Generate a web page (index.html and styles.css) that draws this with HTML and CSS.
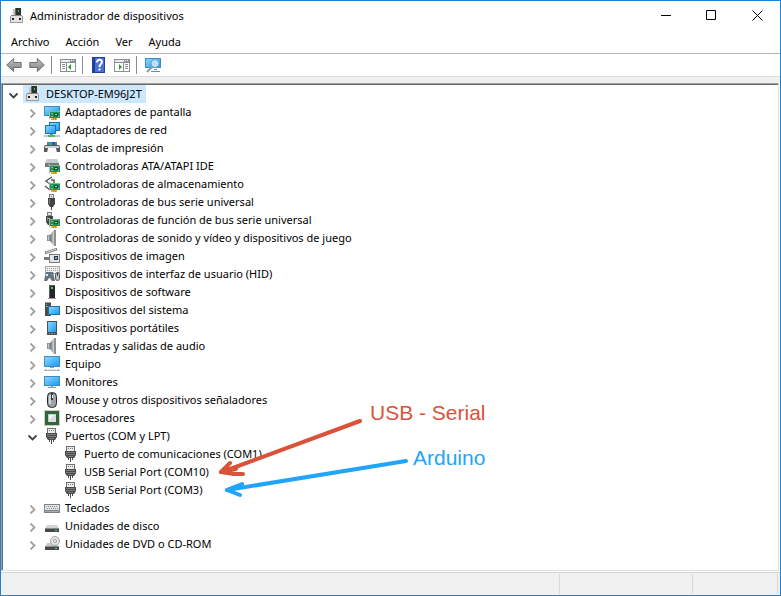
FILE: index.html
```html
<!DOCTYPE html>
<html lang="es">
<head>
    <meta charset="UTF-8">
    <meta name="viewport" content="width=device-width, initial-scale=1.0">
    <title>Administrador de dispositivos</title>
    <link rel="stylesheet" href="styles.css">
</head>
<body>
    <svg class="sprite" aria-hidden="true">
        <defs>
            <linearGradient id="screen" x1="0" y1="0" x2="1" y2="1">
                <stop offset="0" stop-color="#8ad6ff"/>
                <stop offset="1" stop-color="#1b9bf5"/>
            </linearGradient>
            <linearGradient id="metal" x1="0" y1="0" x2="1" y2="0">
                <stop offset="0" stop-color="#6d7276"/>
                <stop offset="1" stop-color="#d5d8da"/>
            </linearGradient>
            <linearGradient id="arrow" x1="0" y1="0" x2="0" y2="1">
                <stop offset="0" stop-color="#c4c4c4"/>
                <stop offset="1" stop-color="#7d7d7d"/>
            </linearGradient>
        </defs>

        <!-- shared parts -->
        <symbol id="card" viewBox="0 0 16 16">
            <path fill="#f2b01e" d="M7 13h6v3H7z"/>
            <path fill="#c98f10" d="M9 14h1v2H9zM11 14h1v2h-1z"/>
            <path fill="#a9b0b4" d="M4 6h2v9H5V7H4z"/>
            <path fill="#2c8a55" d="M6 7h10v7H6z"/>
            <path fill="#6cc28b" d="M6 7h10v1H6zM7 9h2v1H7zM14 12h1v1h-1zM7 12h2v1H7z"/>
            <path fill="#14532f" d="M10 9h4v3h-4z"/>
            <path fill="#9adfb0" d="M11 10h2v1h-2z"/>
        </symbol>
        <symbol id="plug" viewBox="0 0 16 16">
            <path fill="#6f6f6f" d="M3 0h9v5H3z"/>
            <path fill="#ececec" d="M4 1h7v4H4z"/>
            <path fill="#777" d="M5 2h1v1H5zM7 2h1v1H7zM9 2h1v1H9z"/>
            <path fill="#4a4a4a" d="M2 5h11v4l-2 3H4L2 9z"/>
            <path fill="#7d7d7d" d="M3 6h9v1H3zM3 8h9v1H3zM5 10h5v1H5z"/>
            <path fill="#4a4a4a" d="M5 12h1v2H5zM9 12h1v2H9zM7 12h1v4H7z"/>
        </symbol>

        <!-- window and toolbar -->
        <symbol id="pc" viewBox="0 0 16 16">
            <path fill="#c4c4c4" d="M4 1h3v6H4z"/>
            <path fill="#303030" d="M7 0h5v7H7z"/>
            <path fill="#666" d="M6 0h1v7H6z"/>
            <path fill="#29d64b" d="M9 2h1v2H9z"/>
            <path fill="#9b9b9b" d="M1 8h13v7H1z"/>
            <path fill="#e4e4e4" d="M2 8h11v6H2z"/>
            <path fill="#888" d="M2 7h11v1H2z"/>
            <path fill="#222" d="M3 10h2v2H3zM10 10h2v2h-2z"/>
        </symbol>
        <symbol id="back" viewBox="0 0 16 16">
            <path fill="url(#arrow)" stroke="#707070" d="M.7 8l7-6.500v4h7.500v5H7.700v4z"/>
        </symbol>
        <symbol id="forward" viewBox="0 0 16 16">
            <path fill="url(#arrow)" stroke="#707070" d="M15.300 8l-7-6.500v4H.8v5h7.500v4z"/>
        </symbol>
        <symbol id="tree-pane" viewBox="0 0 16 16">
            <path fill="#8b9097" d="M0 2h16v13H0z"/>
            <path fill="#fff" d="M1 6h5v8H1zM7 6h8v8H7z"/>
            <path fill="#e8ecf0" d="M1 3h9v2H1z"/>
            <path fill="#fff" d="M11 3h1v1h-1zM13 3h1v1h-1z"/>
            <path fill="#8b9097" d="M2 7h3v1H2zM2 9h3v1H2zM2 11h3v1H2z"/>
            <path fill="#2c9a2c" d="M11 7v6l-3-3z"/>
        </symbol>
        <symbol id="help" viewBox="0 0 16 16">
            <path fill="#223f9c" d="M1 0h13v16H1z"/>
            <path fill="#4a6fd0" d="M4 1h9v14H4z"/>
            <path fill="none" stroke="#fff" stroke-width="2" d="M6 5.500c0-4 5-3.500 5-.5 0 2-2.500 2-2.500 5"/>
            <path fill="#fff" d="M7.500 11.500h2v2h-2z"/>
        </symbol>
        <symbol id="action-pane" viewBox="0 0 16 16">
            <path fill="#8b9097" d="M0 2h16v13H0z"/>
            <path fill="#fff" d="M1 6h8v8H1zM10 6h5v8h-5z"/>
            <path fill="#e8ecf0" d="M1 3h9v2H1z"/>
            <path fill="#fff" d="M11 3h1v1h-1zM13 3h1v1h-1z"/>
            <path fill="#8b9097" d="M11 7h3v1h-3zM11 9h3v1h-3zM11 11h3v1h-3z"/>
            <path fill="#2c9a2c" d="M5 7v6l3-3z"/>
        </symbol>
        <symbol id="scan" viewBox="0 0 16 16">
            <path fill="#3f8cc0" d="M0 1h16v10H0z"/>
            <path fill="url(#screen)" d="M1 2h14v8H1z"/>
            <path fill="#5b8fb0" d="M9 12h3v1H9zM6 14h9v1H6z"/>
            <path stroke="#8b9aa6" stroke-width="2" d="M7 10l-5 5"/>
            <circle cx="10" cy="6.500" r="4" fill="#b8e4ff" stroke="#7f9bb0"/>
        </symbol>

        <!-- device categories -->
        <symbol id="display-adapter" viewBox="0 0 16 16">
            <path fill="#3f8cc0" d="M0 2h16v10H0z"/>
            <path fill="url(#screen)" d="M1 3h14v8H1z"/>
            <use href="#card"/>
        </symbol>
        <symbol id="network" viewBox="0 0 16 16">
            <path fill="#246fa8" d="M5 0h11v9H5z"/>
            <path fill="url(#screen)" d="M6 1h9v7H6z"/>
            <path fill="#246fa8" d="M1 3h11v9H1z"/>
            <path fill="url(#screen)" d="M2 4h9v7H2z"/>
            <path fill="#c3c7c9" d="M0 13h16v2H0z"/>
            <path fill="#4fb56a" d="M6 12h3v1h2v2H4v-2h2z"/>
        </symbol>
        <symbol id="printer" viewBox="0 0 16 16">
            <path fill="#777" d="M3 2h10v4H3z"/>
            <path fill="#18a5df" d="M5 2h3v3H5z"/>
            <path fill="#2456c8" d="M8 2h3v3H8z"/>
            <path fill="#34b74e" d="M6 4h2v1H6z"/>
            <path fill="#55595d" d="M1 5h14l1 2v5H0V7z"/>
            <path fill="#cfd2d4" d="M1 6h14v2H1z"/>
            <path fill="#fafafa" d="M4 8h8l1 5H3z"/>
        </symbol>
        <symbol id="ata" viewBox="0 0 16 16">
            <path fill="#c8cbcd" d="M3 1h10l2 4H1z"/>
            <path fill="#75797c" d="M1 5h14v4H1z"/>
            <use href="#card"/>
        </symbol>
        <symbol id="storage" viewBox="0 0 16 16">
            <path fill="none" stroke="#5a5a5a" stroke-width="1.500" d="M8 1L2 5l4 3M7 4h3v4H7M1 10l5 4"/>
            <use href="#card"/>
        </symbol>
        <symbol id="usb" viewBox="0 0 16 16">
            <path fill="#808080" d="M5 0h5v5H5z"/>
            <path fill="#e6e6e6" d="M6 1h3v3H6z"/>
            <path fill="#777" d="M7 2h1v1H7z"/>
            <path fill="#444" d="M4 4h7v6l-2 3H6l-2-3z"/>
            <path fill="#808080" d="M5 5h1v5H5z"/>
            <path fill="#444" d="M7 13h1v3H7z"/>
        </symbol>
        <symbol id="usb-function" viewBox="0 0 16 16">
            <path fill="#808080" d="M3 0h5v4H3z"/>
            <path fill="#e6e6e6" d="M4 1h3v2H4z"/>
            <path fill="#444" d="M2 4h7v6l-2 3H4l-2-3z"/>
            <path fill="#808080" d="M3 5h1v4H3z"/>
            <path fill="#444" d="M5 12h1v3H5z"/>
            <use href="#card"/>
        </symbol>
        <symbol id="speaker" viewBox="0 0 16 16">
            <path fill="#8b9196" d="M3 5h3v6H3z"/>
            <path fill="url(#metal)" d="M6 5l4-5v16l-4-5z"/>
            <path fill="#8b9196" d="M10 0h2v16h-2z"/>
            <path fill="#c9cdd0" d="M4 6h1v4H4z"/>
        </symbol>
        <symbol id="camera" viewBox="0 0 16 16">
            <path stroke="#777" stroke-width="2.500" d="M1 5l12-4"/>
            <path stroke="#e5e5e5" d="M2 4.600l10-3.300"/>
            <path fill="#7c7c7c" d="M5 6h11v9H5z"/>
            <path fill="#e3e5e6" d="M6 7h9v7H6z"/>
            <path fill="#777" d="M0 9h5v3H0z"/>
            <path fill="#333" d="M10 8h4v4h-4z"/>
            <path fill="#6db0d8" d="M11 9h2v2h-2z"/>
        </symbol>
        <symbol id="hid" viewBox="0 0 16 16">
            <path fill="#a4a9ad" d="M1 0h15v8H1z"/>
            <path fill="#f0f0f0" d="M2 1h13v6H2z"/>
            <path stroke="#999" stroke-dasharray="1 1" d="M3 2.500h11M3 4.500h11"/>
            <path fill="#6a7178" d="M2 6h7l2 9H8l-2-3H5l-2 3H0z"/>
            <path fill="#d0e8f8" d="M2 8h2v2H2z"/>
            <path fill="#2692e0" d="M6 8h2v2H6z"/>
            <rect x="11.500" y="6.500" width="4" height="8" rx="2" fill="#bfc4c8" stroke="#555"/>
            <path fill="#444" d="M13 7h1v3h-1z"/>
        </symbol>
        <symbol id="software" viewBox="0 0 16 16">
            <path fill="#5d5d5d" d="M5 1h6v13H5z"/>
            <path fill="#262626" d="M6 2h5v12H6z"/>
            <path fill="#3be04e" d="M7 3h2v2H7z"/>
            <path fill="#9b9b9b" d="M4 14h8v1H4z"/>
        </symbol>
        <symbol id="system" viewBox="0 0 16 16">
            <path fill="#4a4e52" d="M1 0h6v14H1z"/>
            <path fill="#9da2a6" d="M1 0h6v1H1zM2 4h3v1H2z"/>
            <path fill="#3be04e" d="M2 2h1v1H2z"/>
            <path fill="#246fa8" d="M4 4h12v9H4z"/>
            <path fill="url(#screen)" d="M5 5h10v7H5z"/>
        </symbol>
        <symbol id="portable" viewBox="0 0 16 16">
            <path fill="#45515c" d="M3 1h10v14H3z"/>
            <path fill="url(#screen)" d="M4 2h8v10H4z"/>
            <path fill="#8d959c" d="M5 13h1v1H5zM7 13h2v1H7zM10 13h1v1h-1z"/>
        </symbol>
        <symbol id="computer" viewBox="0 0 16 16">
            <path fill="#3f8cc0" d="M0 0h16v11H0z"/>
            <path fill="url(#screen)" d="M1 1h14v9H1z"/>
            <path fill="#7ba3bd" d="M6 11h4v1H6z"/>
            <path fill="#a7b4c0" d="M1 13h14l1 2H0z"/>
            <path fill="#e4e9ed" d="M2 13h12v1H2z"/>
        </symbol>
        <symbol id="monitor" viewBox="0 0 16 16">
            <path fill="#3f8cc0" d="M0 2h16v10H0z"/>
            <path fill="url(#screen)" d="M1 3h14v8H1z"/>
            <path fill="#7ba3bd" d="M7 12h2v1H7zM4 13h8v1H4z"/>
        </symbol>
        <symbol id="mouse" viewBox="0 0 16 16">
            <rect x="3.500" y=".5" width="9" height="15" rx="4" fill="#9ca2a7" stroke="#24282b"/>
            <path fill="#d0d4d7" d="M5 3h2v9H5z"/>
            <path fill="#33383c" d="M7 1h2v7H7z"/>
            <path fill="#fff" d="M8 3h1v3H8z"/>
        </symbol>
        <symbol id="cpu" viewBox="0 0 16 16">
            <rect x=".5" y=".5" width="15" height="15" fill="none" stroke="#b9985a" stroke-dasharray="1 1"/>
            <path fill="#2d6549" d="M1 1h14v14H1z"/>
            <path fill="#c2cdc6" d="M4 4h8v8H4z"/>
            <path fill="#dcdcdc" d="M5 5h7v7H5z"/>
            <path fill="#f8f8f8" d="M5 5h5L5 10z"/>
        </symbol>
        <symbol id="keyboard" viewBox="0 0 16 16">
            <path fill="#7d8388" d="M0 4h16v9H0z"/>
            <path fill="#e3e6e8" d="M1 5h14v5H1z"/>
            <path stroke="#888" stroke-dasharray="1 1" d="M2 6.500h12M3 8.500h11"/>
            <path fill="#a7adb2" d="M1 11h14v1H1z"/>
        </symbol>
        <symbol id="disk" viewBox="0 0 16 16">
            <path fill="#d3d5d7" d="M3 7h10l2 3H1z"/>
            <path fill="#46494c" d="M1 10h14v4H1z"/>
            <path fill="#8a8d90" d="M1 10h14v1H1z"/>
            <path fill="#3be04e" d="M11 12h2v1h-2z"/>
        </symbol>
        <symbol id="dvd" viewBox="0 0 16 16">
            <path fill="#c6c9cb" d="M3 7h10l2 4H1z"/>
            <circle cx="11" cy="5" r="4.500" fill="#e3e5e6" stroke="#a5a5a5"/>
            <circle cx="11" cy="5" r="1.500" fill="#fff" stroke="#999"/>
            <path fill="#46494c" d="M1 10h14v4H1z"/>
            <path fill="#8a8d90" d="M1 10h14v1H1z"/>
            <path fill="#3be04e" d="M11 12h2v1h-2z"/>
        </symbol>

        <symbol id="closed" viewBox="0 0 9 9">
            <path fill="none" stroke="#a0a0a0" stroke-width="1.800" d="M2.500.5l4 4-4 4"/>
        </symbol>
        <symbol id="open" viewBox="0 0 9 9">
            <path fill="none" stroke="#404040" stroke-width="1.800" d="M.5 2.500l4 4 4-4"/>
        </symbol>
    </svg>

    <div class="window">
        <header class="titlebar">
            <svg class="icon"><use href="#pc"/></svg>
            <h1>Administrador de dispositivos</h1>
            <div class="controls">
                <button type="button" aria-label="Minimizar"><svg viewBox="0 0 11 11"><path d="M1 5.500h10"/></svg></button>
                <button type="button" aria-label="Maximizar"><svg viewBox="0 0 11 11"><path d="M.5.5h9v9h-9z"/></svg></button>
                <button type="button" aria-label="Cerrar"><svg viewBox="0 0 11 11"><path d="M.5.5l10 10M10.500.5l-10 10"/></svg></button>
            </div>
        </header>

        <nav class="menu">
            <button type="button">Archivo</button>
            <button type="button">Acción</button>
            <button type="button">Ver</button>
            <button type="button">Ayuda</button>
        </nav>

        <div class="toolbar">
            <button type="button" aria-label="Atrás"><svg class="icon"><use href="#back"/></svg></button>
            <button type="button" aria-label="Adelante"><svg class="icon"><use href="#forward"/></svg></button>
            <span class="separator"></span>
            <button type="button" aria-label="Mostrar árbol"><svg class="icon"><use href="#tree-pane"/></svg></button>
            <span class="separator"></span>
            <button type="button" aria-label="Ayuda"><svg class="icon"><use href="#help"/></svg></button>
            <button type="button" aria-label="Mostrar acciones"><svg class="icon"><use href="#action-pane"/></svg></button>
            <span class="separator"></span>
            <button type="button" aria-label="Buscar cambios"><svg class="icon"><use href="#scan"/></svg></button>
        </div>

        <main class="panel">
            <div class="panel-inner">
                <ul class="tree">
                    <li>
                        <div class="row"><button type="button" class="toggle" aria-label="Contraer"><svg><use href="#open"/></svg></button><span class="item selected"><svg class="icon"><use href="#pc"/></svg>DESKTOP-EM96J2T</span></div>
                        <ul>
                            <li class="row"><button type="button" class="toggle" aria-label="Expandir"><svg><use href="#closed"/></svg></button><span class="item"><svg class="icon"><use href="#display-adapter"/></svg>Adaptadores de pantalla</span></li>
                            <li class="row"><button type="button" class="toggle" aria-label="Expandir"><svg><use href="#closed"/></svg></button><span class="item"><svg class="icon"><use href="#network"/></svg>Adaptadores de red</span></li>
                            <li class="row"><button type="button" class="toggle" aria-label="Expandir"><svg><use href="#closed"/></svg></button><span class="item"><svg class="icon"><use href="#printer"/></svg>Colas de impresión</span></li>
                            <li class="row"><button type="button" class="toggle" aria-label="Expandir"><svg><use href="#closed"/></svg></button><span class="item"><svg class="icon"><use href="#ata"/></svg>Controladoras ATA/ATAPI IDE</span></li>
                            <li class="row"><button type="button" class="toggle" aria-label="Expandir"><svg><use href="#closed"/></svg></button><span class="item"><svg class="icon"><use href="#storage"/></svg>Controladoras de almacenamiento</span></li>
                            <li class="row"><button type="button" class="toggle" aria-label="Expandir"><svg><use href="#closed"/></svg></button><span class="item"><svg class="icon"><use href="#usb"/></svg>Controladoras de bus serie universal</span></li>
                            <li class="row"><button type="button" class="toggle" aria-label="Expandir"><svg><use href="#closed"/></svg></button><span class="item"><svg class="icon"><use href="#usb-function"/></svg>Controladoras de función de bus serie universal</span></li>
                            <li class="row"><button type="button" class="toggle" aria-label="Expandir"><svg><use href="#closed"/></svg></button><span class="item"><svg class="icon"><use href="#speaker"/></svg>Controladoras de sonido y vídeo y dispositivos de juego</span></li>
                            <li class="row"><button type="button" class="toggle" aria-label="Expandir"><svg><use href="#closed"/></svg></button><span class="item"><svg class="icon"><use href="#camera"/></svg>Dispositivos de imagen</span></li>
                            <li class="row"><button type="button" class="toggle" aria-label="Expandir"><svg><use href="#closed"/></svg></button><span class="item"><svg class="icon"><use href="#hid"/></svg>Dispositivos de interfaz de usuario (HID)</span></li>
                            <li class="row"><button type="button" class="toggle" aria-label="Expandir"><svg><use href="#closed"/></svg></button><span class="item"><svg class="icon"><use href="#software"/></svg>Dispositivos de software</span></li>
                            <li class="row"><button type="button" class="toggle" aria-label="Expandir"><svg><use href="#closed"/></svg></button><span class="item"><svg class="icon"><use href="#system"/></svg>Dispositivos del sistema</span></li>
                            <li class="row"><button type="button" class="toggle" aria-label="Expandir"><svg><use href="#closed"/></svg></button><span class="item"><svg class="icon"><use href="#portable"/></svg>Dispositivos portátiles</span></li>
                            <li class="row"><button type="button" class="toggle" aria-label="Expandir"><svg><use href="#closed"/></svg></button><span class="item"><svg class="icon"><use href="#speaker"/></svg>Entradas y salidas de audio</span></li>
                            <li class="row"><button type="button" class="toggle" aria-label="Expandir"><svg><use href="#closed"/></svg></button><span class="item"><svg class="icon"><use href="#computer"/></svg>Equipo</span></li>
                            <li class="row"><button type="button" class="toggle" aria-label="Expandir"><svg><use href="#closed"/></svg></button><span class="item"><svg class="icon"><use href="#monitor"/></svg>Monitores</span></li>
                            <li class="row"><button type="button" class="toggle" aria-label="Expandir"><svg><use href="#closed"/></svg></button><span class="item"><svg class="icon"><use href="#mouse"/></svg>Mouse y otros dispositivos señaladores</span></li>
                            <li class="row"><button type="button" class="toggle" aria-label="Expandir"><svg><use href="#closed"/></svg></button><span class="item"><svg class="icon"><use href="#cpu"/></svg>Procesadores</span></li>
                            <li>
                                <div class="row"><button type="button" class="toggle" aria-label="Contraer"><svg><use href="#open"/></svg></button><span class="item"><svg class="icon"><use href="#plug"/></svg>Puertos (COM y LPT)</span></div>
                                <ul class="leaves">
                                    <li class="row"><span class="item"><svg class="icon"><use href="#plug"/></svg>Puerto de comunicaciones (COM1)</span></li>
                                    <li class="row"><span class="item"><svg class="icon"><use href="#plug"/></svg>USB Serial Port (COM10)</span></li>
                                    <li class="row"><span class="item"><svg class="icon"><use href="#plug"/></svg>USB Serial Port (COM3)</span></li>
                                </ul>
                            </li>
                            <li class="row"><button type="button" class="toggle" aria-label="Expandir"><svg><use href="#closed"/></svg></button><span class="item"><svg class="icon"><use href="#keyboard"/></svg>Teclados</span></li>
                            <li class="row"><button type="button" class="toggle" aria-label="Expandir"><svg><use href="#closed"/></svg></button><span class="item"><svg class="icon"><use href="#disk"/></svg>Unidades de disco</span></li>
                            <li class="row"><button type="button" class="toggle" aria-label="Expandir"><svg><use href="#closed"/></svg></button><span class="item"><svg class="icon"><use href="#dvd"/></svg>Unidades de DVD o CD-ROM</span></li>
                        </ul>
                    </li>
                </ul>

                <!-- notes drawn over the ports -->
                <svg class="notes" viewBox="0 0 300 110">
                    <g class="note-serial">
                        <path d="M151 31L13 82M21 73L12 82L25 84"/>
                        <path d="M25 84H34M12 82L27 79"/>
                        <text x="161" y="30">USB - Serial</text>
                    </g>
                    <g class="note-arduino">
                        <path d="M197 71L18 100M33 94L18 100L31 105"/>
                        <path d="M18 100L26 97"/>
                        <text x="204" y="75">Arduino</text>
                    </g>
                </svg>
            </div>
        </main>

        <footer class="statusbar">
            <span class="cell"></span>
            <span class="cell"></span>
            <span class="cell"></span>
        </footer>
    </div>
</body>
</html>
```

FILE: styles.css
```css
* {
    box-sizing: border-box;
}

body {
    margin: 0;
    font-family: "Noto Sans", "Open Sans", sans-serif;
    font-size: 11px;
    line-height: 18px;
    color: #000;
}

button {
    display: flex;
    align-items: center;
    justify-content: center;
    padding: 0;
    border: 0;
    background: none;
    font: inherit;
    color: inherit;
}

ul {
    margin: 0;
    padding: 0;
    list-style: none;
}

.sprite {
    position: absolute;
    width: 0;
    height: 0;
}

.icon {
    display: block;
    flex: none;
    width: 16px;
    height: 16px;
}

.window {
    display: flex;
    flex-direction: column;
    min-height: 100vh;
    border: 1px solid #1883d7;
    background: #fff;
}

/* title bar */
.titlebar {
    display: flex;
    align-items: center;
    gap: 5px;
    height: 30px;
    padding-left: 8px;
}

.titlebar h1 {
    flex: 1;
    margin: 0;
    font-size: 11px;
    font-weight: normal;
}

.controls {
    display: flex;
    align-self: flex-start;
}

.controls button {
    width: 46px;
    height: 29px;
}

.controls button:hover {
    background: #e5e5e5;
}

.controls svg {
    width: 11px;
    height: 11px;
    fill: none;
    stroke: #000;
}

/* menu and toolbar */
.menu {
    display: flex;
    height: 23px;
    padding-left: 2px;
    border-bottom: 1px solid #b4b9c1;
}

.menu button {
    padding: 0 8px;
}

.toolbar {
    display: flex;
    align-items: center;
    gap: 1px;
    height: 23px;
    padding-left: 2px;
    border-bottom: 1px solid #dcdcdc;
}

.toolbar button {
    width: 22px;
    height: 22px;
}

.separator {
    width: 1px;
    height: 18px;
    margin: 0 4px 0 2px;
    background: #8d8d8d;
}

/* device tree */
.panel {
    display: flex;
    flex: 1;
    padding: 6px 1px 1px 0;
    background: linear-gradient(#f0f0f0 6px, #fff 6px);
}

.panel-inner {
    position: relative;
    flex: 1;
    padding: 0 1px;
    border: 1px solid #e3e3e3;
    border-top-color: #a0a0a0;
    border-left-color: #a0a0a0;
    box-shadow: inset 1px 1px #696969;
}

.tree {
    padding: 1px;
}

.tree ul {
    padding-left: 19px;
}

.tree .leaves {
    padding-left: 38px;
}

.row {
    display: flex;
    height: 18px;
}

.toggle {
    width: 19px;
    height: 18px;
    padding-top: 2px;
}

.toggle svg {
    width: 9px;
    height: 9px;
}

.item {
    display: flex;
    align-items: center;
    gap: 5px;
    padding: 0 4px 0 2px;
    white-space: nowrap;
}

.selected {
    background: #cce8ff;
}

/* notes */
.notes {
    position: absolute;
    top: 306px;
    left: 207px;
    width: 300px;
    height: 110px;
    font-family: "Liberation Sans", Arial, sans-serif;
    font-size: 21px;
    pointer-events: none;
}

.notes path {
    fill: none;
    stroke-width: 4px;
    stroke-linecap: round;
    stroke-linejoin: round;
}

.note-serial {
    fill: #d9533a;
    stroke: #d9533a;
}

.note-arduino {
    fill: #20a5fb;
    stroke: #20a5fb;
}

.notes text {
    stroke: none;
}

/* status bar */
.statusbar {
    display: flex;
    height: 23px;
    padding: 1px 2px 1px 0;
    border-top: 1px solid #d7d7d7;
    background: #f0f0f0;
}

.cell {
    width: 85px;
    border-right: 1px solid #d7d7d7;
}

.cell:first-child {
    flex: 1;
}

.cell:nth-child(2) {
    width: 133px;
}
```
